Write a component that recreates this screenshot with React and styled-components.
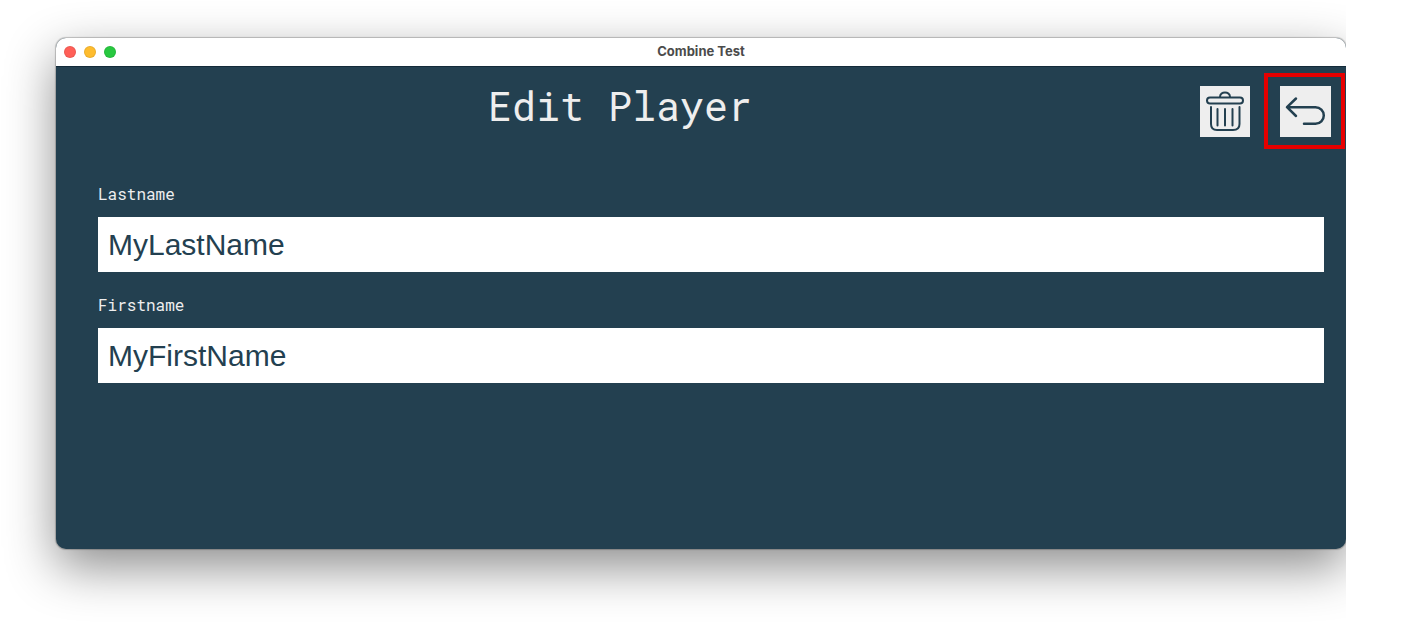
import React, { useState } from "react";
import styled, { createGlobalStyle } from "styled-components";

const navy = "#234050";
const mono = '"Roboto Mono", "DejaVu Sans Mono", monospace';

const GlobalStyle = createGlobalStyle`
  *, *::before, *::after { box-sizing: border-box; }
  body { margin: 0; background: #fff; }
`;

const Stage = styled.div`
  min-height: 100vh;
  margin-right: 56px;
  padding: 38px 0 74px 56px;
  overflow: hidden;
`;

const Window = styled.div`
  border-radius: 10px;
  background: ${navy};
  box-shadow: 0 0 1px 1px rgba(0, 0, 0, 0.22), 0 18px 50px rgba(0, 0, 0, 0.45);
`;

const TitleBar = styled.div`
  display: grid;
  grid-template-columns: 1fr auto 1fr;
  align-items: center;
  height: 28px;
  padding: 0 8px;
  border-radius: 10px 10px 0 0;
  background: #fff;
`;

const WindowTitle = styled.div`
  padding-bottom: 2px;
  font: 700 13px/16px Inter, sans-serif;
  color: #4b4b4b;
`;

const Lights = styled.div`
  display: flex;
  gap: 8px;
`;

const Light = styled.button`
  width: 12px;
  height: 12px;
  padding: 0;
  border: 1px solid rgba(0, 0, 0, 0.08);
  border-radius: 50%;
  background: ${(p) => p.$color};
`;

const Page = styled.main`
  border-top: 1px solid #132a39;
  border-radius: 0 0 10px 10px;
  padding-bottom: 166px;
`;

const Header = styled.header`
  display: flex;
  align-items: flex-start;
  padding: 6px 1px 0 0;
`;

const Heading = styled.h1`
  flex: 1;
  margin: 0;
  padding-top: 6px;
  text-align: center;
  font: 400 40px/54px ${mono};
  color: #eee;
`;

const Action = styled.div`
  padding: 9px 10px 8px 12px;
  border: 4px solid ${(p) => (p.$marked ? "#e60000" : "transparent")};
`;

const IconButton = styled.button`
  display: block;
  width: ${(p) => p.$width}px;
  height: 51px;
  padding: 0;
  border: 0;
  background: #eee;
  color: ${navy};

  svg {
    display: block;
    width: 100%;
    height: 100%;
    fill: none;
    stroke: currentColor;
    stroke-linecap: round;
    stroke-linejoin: round;
  }
`;

const Form = styled.form`
  display: flex;
  flex-direction: column;
  gap: 20px;
  padding: 32px 22px 0 42px;
`;

const Field = styled.div`
  display: flex;
  flex-direction: column;
  gap: 10px;
`;

const Label = styled.label`
  font: 400 16px/26px ${mono};
  color: #eee;
`;

const Input = styled.input`
  width: 100%;
  height: 55px;
  padding: 0 10px;
  border: 0;
  border-radius: 0;
  background: #fff;
  color: ${navy};
  font: 400 30px/36px "Liberation Sans", Arial, sans-serif;
`;

function TrashIcon() {
  return (
    <svg viewBox="0 0 50 51" strokeWidth="2" aria-hidden="true">
      <rect x="7" y="11.5" width="36" height="6" rx="3" />
      <path d="M20 11c0-6 10-6 10 0" />
      <path d="M11 21v17Q11 44 17 44H33Q39.500 44 39.500 38V21M17.500 23v16.500M25 23v16.500M32.500 23v16.500" />
    </svg>
  );
}

function BackIcon() {
  return (
    <svg viewBox="0 0 51 51" strokeWidth="2.500" aria-hidden="true">
      <path d="M16 12.500L7 21.200l9 8.800M7.500 21.200H35.500a8.300 8.300 0 0 1 0 16.600H24" />
    </svg>
  );
}

export default function App() {
  const [lastname, setLastname] = useState("MyLastName");
  const [firstname, setFirstname] = useState("MyFirstName");

  return (
    <>
      <GlobalStyle />
      <Stage>
        <Window>
          <TitleBar>
            <Lights>
              <Light type="button" aria-label="Close" $color="#ff5f57" />
              <Light type="button" aria-label="Minimize" $color="#febc2e" />
              <Light type="button" aria-label="Zoom" $color="#28c840" />
            </Lights>
            <WindowTitle>Combine Test</WindowTitle>
          </TitleBar>
          <Page>
            <Header>
              <Heading>Edit Player</Heading>
              <Action>
                <IconButton type="button" aria-label="Delete player" $width={50}>
                  <TrashIcon />
                </IconButton>
              </Action>
              <Action $marked>
                <IconButton type="button" aria-label="Back" $width={51}>
                  <BackIcon />
                </IconButton>
              </Action>
            </Header>
            <Form>
              <Field>
                <Label htmlFor="lastname">Lastname</Label>
                <Input id="lastname" value={lastname} onChange={(e) => setLastname(e.target.value)} />
              </Field>
              <Field>
                <Label htmlFor="firstname">Firstname</Label>
                <Input id="firstname" value={firstname} onChange={(e) => setFirstname(e.target.value)} />
              </Field>
            </Form>
          </Page>
        </Window>
      </Stage>
    </>
  );
}
